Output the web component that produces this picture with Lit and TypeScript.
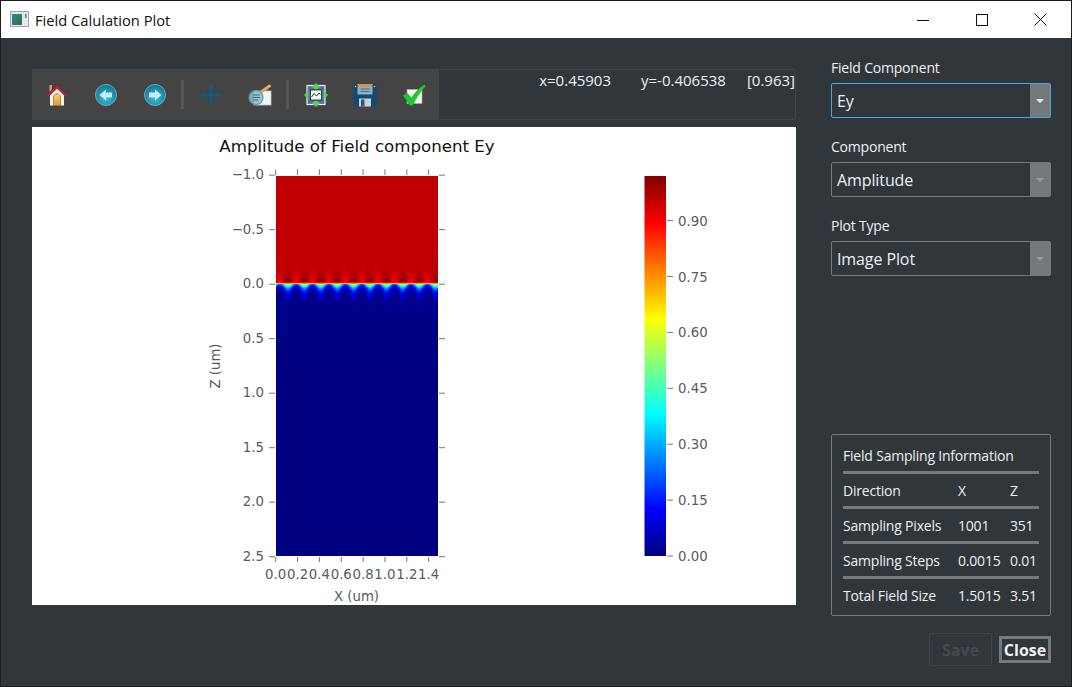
import { LitElement, html, css, svg } from "lit";
import { customElement } from "lit/decorators.js";

const jet = (t: number): [number, number, number] => {
  const c = (v: number) => Math.max(0, Math.min(1, v));
  return [
    c(Math.min(4 * t - 1.5, -4 * t + 4.5)),
    c(Math.min(4 * t - 0.5, -4 * t + 3.5)),
    c(Math.min(4 * t + 0.5, -4 * t + 2.5)),
  ];
};
const hex = (t: number) => {
  const [r, g, b] = jet(t);
  return `rgb(${Math.round(r * 255)},${Math.round(g * 255)},${Math.round(b * 255)})`;
};

const yTicks = ["\u22121.0", "\u22120.5", "0.0", "0.5", "1.0", "1.5", "2.0", "2.5"];
const xTicks = ["0.0", "0.2", "0.4", "0.6", "0.8", "1.0", "1.2", "1.4"];
const cTicks = ["0.00", "0.15", "0.30", "0.45", "0.60", "0.75", "0.90"];
const stops = Array.from({ length: 33 }, (_, i) => i / 32);

@customElement("heat-map")
class HeatMap extends LitElement {
  static styles = css`
    :host { display: block; position: absolute; left: 244px; top: 49px; width: 162px; height: 380px; }
    canvas { display: block; width: 162px; height: 380px; }
  `;
  render() {
    return html`<canvas width="162" height="380"></canvas>`;
  }
  firstUpdated() {
    const cv = this.renderRoot.querySelector("canvas") as HTMLCanvasElement;
    const ctx = cv.getContext("2d")!;
    const img = ctx.createImageData(162, 380);
    const k = (2 * Math.PI) / 16.4;
    const iface = 108; // row of the interface
    for (let y = 0; y < 380; y++) {
      for (let x = 0; x < 162; x++) {
        const c = (1 + Math.cos(k * (x + 276 - 287.5))) / 2;
        let v: number;
        if (y < iface) {
          const d = iface - y;
          v = 0.937 + (c - 0.5) * 0.15 * Math.exp(-(d - 2) / 6);
          if (d === 1) v = 0.68 + 0.06 * c;
          if (d === 2) v = Math.min(v, 0.88);
        } else {
          const d = y - iface + 0.5;
          v = (0.26 + 0.36 * c) * Math.exp(-d / (1.8 + 3.6 * c)) + 0.015 * Math.exp(-d / 40);
        }
        const [r, g, b] = jet(v);
        const p = (y * 162 + x) * 4;
        img.data[p] = r * 255;
        img.data[p + 1] = g * 255;
        img.data[p + 2] = b * 255;
        img.data[p + 3] = 255;
      }
    }
    ctx.putImageData(img, 0, 0);
  }
}

const plotSvg = html`<svg class="plot" viewBox="32 127 764 478" width="764" height="478">
  <defs>
    <linearGradient id="cb" x1="0" y1="1" x2="0" y2="0">
      ${stops.map((s) => svg`<stop offset=${s} stop-color=${hex(s)}></stop>`)}
    </linearGradient>
  </defs>
  <text class="title" x="357" y="152" text-anchor="middle">Amplitude of Field component Ey</text>
  ${yTicks.map((t, i) => {
    const y = 175.2 + i * 54.5;
    return svg`<line class="tick" x1="269" x2="275" y1=${y} y2=${y}></line>
      <line class="tick" x1="439" x2="445" y1=${y} y2=${y}></line>
      <text class="lbl" x="264" y=${y + 4} text-anchor="end">${t}</text>`;
  })}
  ${xTicks.map((t, i) => {
    const x = 275.7 + i * 21.85;
    return svg`<line class="tick" x1=${x} x2=${x} y1="169.5" y2="175"></line>
      <line class="tick" x1=${x} x2=${x} y1="557" y2="562"></line>
      <text class="lbl" x=${x} y="579" text-anchor="middle">${t}</text>`;
  })}
  <text class="lbl" x="356.5" y="600.5" text-anchor="middle">X (um)</text>
  <text class="lbl" transform="translate(220 366) rotate(-90)" text-anchor="middle">Z (um)</text>
  <rect x="644.5" y="176" width="21.5" height="380" fill="url(#cb)"></rect>
  ${cTicks.map((t, i) => {
    const y = 556 - i * 55.9;
    return svg`<line class="tick" x1="667" x2="673" y1=${y} y2=${y}></line>
      <text class="lbl" x="678" y=${y + 5} >${t}</text>`;
  })}
</svg>`;

const icons = {
  home: svg`<svg viewBox="0 0 24 24" width="24" height="24">
    <defs><linearGradient id="door" x1="0" y1="0" x2="0" y2="1"><stop offset="0" stop-color="#f8d078"></stop><stop offset="1" stop-color="#e8962a"></stop></linearGradient></defs>
    <rect x="4.5" y="2" width="2.5" height="7" fill="#c9a27a"></rect>
    <path d="M5 11 L12 4 L19 11 V22.5 H5 Z" fill="#f4f1ea"></path>
    <path d="M8.5 22.5 V13 Q12 8 15.5 13 V22.5 Z" fill="url(#door)" stroke="#8a5a20" stroke-width=".6"></path>
    <path d="M1 13 L12 1.5 L23 13 L20.5 13.5 L12 5.5 L3.5 13.5 Z" fill="#a8283c" stroke="#7a1a2a" stroke-width=".5"></path>
  </svg>`,
  back: svg`<svg viewBox="0 0 24 24" width="24" height="24">
    <defs><radialGradient id="ball" cx=".5" cy=".65" r=".6"><stop offset="0" stop-color="#3cc0d8"></stop><stop offset="1" stop-color="#0d7a9c"></stop></radialGradient></defs>
    <circle cx="12" cy="12" r="10.5" fill="url(#ball)" stroke="#7fa8b4" stroke-width="1"></circle>
    <path d="M5.5 12 L12 6.5 V9.5 H18 V14.5 H12 V17.5 Z" fill="#cdeaf0"></path>
  </svg>`,
  forward: svg`<svg viewBox="0 0 24 24" width="24" height="24">
    <circle cx="12" cy="12" r="10.5" fill="url(#ball)" stroke="#7fa8b4" stroke-width="1"></circle>
    <path d="M18.5 12 L12 6.5 V9.5 H6 V14.5 H12 V17.5 Z" fill="#cdeaf0"></path>
  </svg>`,
  move: svg`<svg viewBox="0 0 24 24" width="24" height="24">
    <path d="M12 1 L15.5 5.5 H13.2 V10.8 H18.5 V8.5 L23 12 L18.5 15.5 V13.2 H13.2 V18.5 H15.5 L12 23 L8.5 18.5 H10.8 V13.2 H5.5 V15.5 L1 12 L5.5 8.5 V10.8 H10.8 V5.5 H8.5 Z" fill="#14597e"></path>
  </svg>`,
  edit: svg`<svg viewBox="0 0 24 24" width="24" height="24">
    <rect x="6" y="8" width="17" height="14" fill="#eef5f6" stroke="#a9d3dc" stroke-width=".8"></rect>
    <path d="M13 9 L21.5 3" stroke="#e8a85c" stroke-width="3" stroke-linecap="round"></path>
    <circle cx="8" cy="14.5" r="7" fill="#8fb8c4" fill-opacity=".85" stroke="#5f96a6" stroke-width="1.2"></circle>
    <path d="M5 12 H12 M5 14.5 H12 M5 17 H10" stroke="#2f7488" stroke-width="1.1"></path>
  </svg>`,
  subplot: svg`<svg viewBox="0 0 24 24" width="24" height="24">
    <rect x="3" y="2.5" width="18" height="19" fill="#4f6fa8" stroke="#eef2f6" stroke-width="1.2"></rect>
    <rect x="6.5" y="7" width="11" height="10" fill="#f4f4f0" stroke="#222" stroke-width=".8"></rect>
    <path d="M7.5 14 L10 10.5 L12.5 13 L15 10 L16.5 11.5" stroke="#333" stroke-width="1" fill="none"></path>
    <path d="M12 0 L16.5 4.5 H14 V6 H10 V4.5 H7.5 Z M12 24 L16.5 19.5 H14 V18 H10 V19.5 H7.5 Z M0 12 L4.5 7.5 V16.5 Z M24 12 L19.5 7.5 V16.5 Z" fill="#52d84e"></path>
  </svg>`,
  save: svg`<svg viewBox="0 0 24 24" width="24" height="24">
    <path d="M1.5 1 H22.5 Q23.5 1 23.5 2 V22 Q23.5 23.5 22 23.5 H2 Q.5 23.5 .5 22 V2 Q.5 1 1.5 1 Z" fill="#124a72"></path>
    <rect x="4.5" y="1" width="15" height="3" fill="#d8905a"></rect>
    <rect x="4.5" y="4" width="15" height="7.5" fill="#8fb0c4"></rect>
    <path d="M7.5 6 H16.5 M7.5 8.5 H16.5" stroke="#3f6a88" stroke-width="1"></path>
    <rect x="6" y="15.5" width="12" height="8" fill="#c8d2d8"></rect>
    <rect x="8" y="16.5" width="3.5" height="7" fill="#33556e"></rect>
    <circle cx="2.5" cy="3.5" r=".7" fill="#cfe0e8"></circle><circle cx="21.5" cy="3.5" r=".7" fill="#cfe0e8"></circle>
  </svg>`,
  check: svg`<svg viewBox="0 0 24 24" width="24" height="24">
    <rect x="5" y="6.5" width="15" height="14" fill="#f4f4f4" stroke="#aaa" stroke-width=".6"></rect>
    <path d="M1 12.5 L5 10 L9.5 15 Q15 6 22.5 1.5 L23.5 3.5 Q16 10.5 10.5 22.5 L8 22.5 Z" fill="#1ccc2a" stroke="#0d9a1a" stroke-width=".4"></path>
  </svg>`,
};

@customElement("app-root")
class AppRoot extends LitElement {
  static styles = css`
    :host {
      display: flex; flex-direction: column; box-sizing: border-box;
      width: 1072px; height: 687px; border: 1px solid #1c1c1c;
      background: #31363b; font-family: "Open Sans", "Noto Sans", sans-serif; color: #eff0f1;
      font-size: 14px;
    }
    * { box-sizing: border-box; }
    .titlebar {
      height: 37px; background: #fff; color: #111; display: flex; align-items: center;
      padding-left: 9px; flex: none;
    }
    .appicon { margin-right: 6px; display: block; }
    .wintitle { font-size: 14.7px; flex: 1; }
    .winbtn { width: 59px; height: 37px; display: flex; align-items: center; justify-content: center; }
    .winbtn svg { display: block; }
    .winbtns { display: flex; margin-right: 1px; }
    .body { flex: 1; display: flex; gap: 35px; padding: 0 20px 20px 31px; min-height: 0; }
    .left { width: 764px; padding-top: 31px; flex: none; display: flex; flex-direction: column; gap: 7px; }
    .toolbar { height: 51px; display: flex; }
    .tools { width: 407px; background: #444; display: flex; align-items: center; flex: none; }
    .tool { width: 49px; height: 51px; display: flex; align-items: center; justify-content: center; flex: none; }
    .tool svg { display: block; }
    .sep { width: 7px; display: flex; justify-content: center; flex: none; }
    .sep::before { content: ""; width: 3px; height: 29px; background: #565656; }
    .status {
      flex: 1; border: 1px solid #3e4347; border-left: none; border-radius: 0 2px 2px 0;
      display: flex; justify-content: flex-end; align-items: flex-start; padding-top: 1px;
      font-size: 15px; line-height: 19px; white-space: pre;
    }
    .status span { display: block; }
    .sx { margin-right: 30px; }
    .sy { margin-right: 21px; }
    .plotwrap { position: relative; height: 478px; background: #fff; }
    .plot { display: block; font-family: "DejaVu Sans", sans-serif; }
    .plot .title { font-size: 16.65px; fill: #111; }
    .plot .lbl { font-size: 13.3px; fill: #5a5a5a; }
    .plot .tick { stroke: #777; stroke-width: 1; }
    .right { flex: 1; display: flex; flex-direction: column; padding-top: 21px; }
    .group { margin-bottom: 20px; }
    .group label { display: block; height: 18px; line-height: 18px; margin-bottom: 6px; font-size: 14px; letter-spacing: -.2px; }
    .combo {
      height: 35px; border: 1px solid #76797c; border-radius: 2px; display: flex; align-items: stretch;
      font-size: 16px;
    }
    .combo.focus { border-color: #3daee9; }
    .combo .val { flex: 1; padding: 1px 0 0 5px; line-height: 33px; letter-spacing: -.1px; }
    .combo .drop { width: 20px; background: #76797c; display: flex; align-items: center; justify-content: center; }
    .combo .drop::before {
      content: ""; border-left: 4px solid transparent; border-right: 4px solid transparent;
      border-top: 4px solid #9a9c9e;
    }
    .combo.focus .drop::before { border-top-color: #eff0f1; }
    .info {
      margin-top: auto; height: 182px; border: 1px solid #76797c; border-radius: 2px;
      padding: 11px 11px 0; display: flex; flex-direction: column; letter-spacing: -.2px;
    }
    .info .head { height: 25px; line-height: 19px; }
    .irow {
      display: grid; grid-template-columns: 115px 52px 1fr; height: 35px; border-top: 3px solid #76797c;
      align-items: center; white-space: nowrap; padding-top: 1px;
    }
    .footer { display: flex; justify-content: flex-end; align-items: center; gap: 7px; margin-top: 17px; height: 33px; }
    .btn { font-weight: 700; font-size: 16px; display: flex; align-items: center; justify-content: center; }
    .save { width: 63px; height: 33px; border: 1px solid #3f4448; border-radius: 2px; color: #454a4e; }
    .close { width: 52px; height: 27px; border: 3px solid #76797c; color: #eff0f1; }
  `;

  private rows = [
    ["Direction", "X", "Z"],
    ["Sampling Pixels", "1001", "351"],
    ["Sampling Steps", "0.0015", "0.01"],
    ["Total Field Size", "1.5015", "3.51"],
  ];

  render() {
    return html`
      <div class="titlebar">
        <svg class="appicon" width="19" height="17" viewBox="0 0 19 17">
          <defs><linearGradient id="ai" x1="0" y1="0" x2="1" y2="1"><stop offset="0" stop-color="#2f8a8a"></stop><stop offset="1" stop-color="#3a6a50"></stop></linearGradient></defs>
          <rect x=".5" y=".5" width="18" height="15" fill="#e4e8ea" stroke="#a0a4a8"></rect>
          <rect x="2" y="3" width="10" height="11" fill="url(#ai)"></rect>
          <rect x="15" y="3" width="1.5" height="4" fill="#4a8a90"></rect>
        </svg>
        <span class="wintitle">Field Calulation Plot</span>
        <div class="winbtns">
          <div class="winbtn"><svg width="12" height="12" viewBox="0 0 12 12"><path d="M0 6.5 H12" stroke="#111"></path></svg></div>
          <div class="winbtn"><svg width="12" height="12" viewBox="0 0 12 12"><rect x=".5" y=".5" width="11" height="11" fill="none" stroke="#111"></rect></svg></div>
          <div class="winbtn"><svg width="13" height="13" viewBox="0 0 13 13"><path d="M.5 .5 L12.5 12.5 M12.5 .5 L.5 12.5" stroke="#111"></path></svg></div>
        </div>
      </div>
      <div class="body">
        <div class="left">
          <div class="toolbar">
            <div class="tools">
              <div class="tool">${icons.home}</div>
              <div class="tool">${icons.back}</div>
              <div class="tool">${icons.forward}</div>
              <div class="sep"></div>
              <div class="tool">${icons.move}</div>
              <div class="tool">${icons.edit}</div>
              <div class="sep"></div>
              <div class="tool">${icons.subplot}</div>
              <div class="tool">${icons.save}</div>
              <div class="tool">${icons.check}</div>
            </div>
            <div class="status">
              <span class="sx">x=0.45903</span><span class="sy">y=-0.406538</span><span>[0.963]</span>
            </div>
          </div>
          <div class="plotwrap">
            ${plotSvg}
            <heat-map></heat-map>
          </div>
        </div>
        <div class="right">
          <div class="group">
            <label>Field Component</label>
            <div class="combo focus"><div class="val">Ey</div><div class="drop"></div></div>
          </div>
          <div class="group">
            <label>Component</label>
            <div class="combo"><div class="val">Amplitude</div><div class="drop"></div></div>
          </div>
          <div class="group">
            <label>Plot Type</label>
            <div class="combo"><div class="val">Image Plot</div><div class="drop"></div></div>
          </div>
          <div class="info">
            <div class="head">Field Sampling Information</div>
            ${this.rows.map((r) => html`<div class="irow"><span>${r[0]}</span><span>${r[1]}</span><span>${r[2]}</span></div>`)}
          </div>
          <div class="footer">
            <div class="btn save">Save</div>
            <div class="btn close">Close</div>
          </div>
        </div>
      </div>
    `;
  }
}
